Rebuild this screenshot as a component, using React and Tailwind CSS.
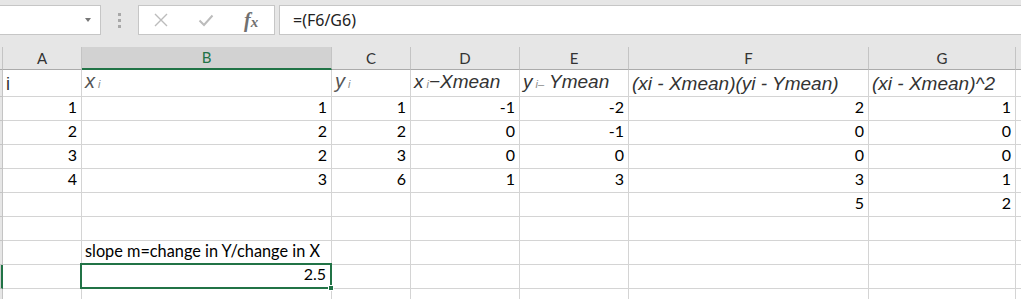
import React from "react";

const COLS = [
  { key: "rh", w: "w-[3px]" },
  { key: "A", w: "w-[79px]" },
  { key: "B", w: "w-[250px]" },
  { key: "C", w: "w-[79px]" },
  { key: "D", w: "w-[109px]" },
  { key: "E", w: "w-[109px]" },
  { key: "F", w: "w-[240px]" },
  { key: "G", w: "w-[147px]" },
];

const rows = [
  [1, 1, 1, -1, -2, 2, 1],
  [2, 2, 2, 0, -1, 0, 0],
  [3, 2, 3, 0, 0, 0, 0],
  [4, 3, 6, 1, 3, 3, 1],
  ["", "", "", "", "", 5, 2],
  ["", "", "", "", "", "", ""],
  ["", "slope", "", "", "", "", ""],
  ["", "2.5", "", "", "", "", ""],
  ["", "", "", "", "", "", ""],
];

const Sub = ({ children }) => (
  <span className="text-[11px] text-[#8a8a8a] ml-[3px]">{children}</span>
);

const headerLabels = [
  <span className="not-italic font-['Liberation_Sans'] text-[18px]">i</span>,
  <span className="text-[#555] text-[20px]">
    x<Sub>i</Sub>
  </span>,
  <span className="text-[#555] text-[20px]">
    y<Sub>i</Sub>
  </span>,
  <span>
    x<Sub>i</Sub>−Xmean
  </span>,
  <span>
    y<Sub>i–</Sub> Ymean
  </span>,
  <span>(xi - Xmean)(yi - Ymean)</span>,
  <span>(xi - Xmean)^2</span>,
];

const TopBar = () => (
  <div className="h-[47px] bg-[#e6e6e6] pt-[5px] flex items-start">
    <div className="w-[101px] h-[30px] bg-white border border-l-0 border-[#c6c6c6] flex items-center justify-end pr-[9px]">
      <div className="w-0 h-0 border-l-[3px] border-r-[3px] border-t-[4px] border-l-transparent border-r-transparent border-t-[#777]" />
    </div>
    <div className="w-[37px] h-[30px] flex flex-col items-center justify-center gap-[3px]">
      <div className="w-[3px] h-[3px] bg-[#a8a8a8]" />
      <div className="w-[3px] h-[3px] bg-[#a8a8a8]" />
      <div className="w-[3px] h-[3px] bg-[#a8a8a8]" />
    </div>
    <div className="w-[137px] h-[30px] bg-white border border-[#c6c6c6] flex items-center">
      <svg className="ml-[14px]" width="16" height="16" viewBox="0 0 16 16">
        <path d="M2 2 L14 14 M14 2 L2 14" stroke="#bcbcbc" strokeWidth="1.4" fill="none" />
      </svg>
      <svg className="ml-[29px]" width="16" height="14" viewBox="0 0 16 14">
        <path d="M1.5 7.5 L6 12 L14.5 2.5" stroke="#bcbcbc" strokeWidth="2" fill="none" />
      </svg>
      <span className="ml-[30px] font-['Liberation_Serif'] italic font-bold text-[#707070] text-[20px] leading-none">
        f<span className="text-[15px]">x</span>
      </span>
    </div>
    <div className="ml-[4px] flex-1 h-[30px] bg-white border border-r-0 border-[#c6c6c6] flex items-center pl-[13px] font-['Noto_Sans'] text-[16px] text-[#222]">
      =(F6/G6)
    </div>
  </div>
);

const HeaderRow = () => (
  <div className="h-[23px] flex bg-[#e6e6e6] font-['Lato'] text-[15px] text-[#333]">
    {COLS.map((c) => {
      const sel = c.key === "B";
      return (
        <div
          key={c.key}
          className={`${c.w} shrink-0 flex items-center justify-center border-r border-[#c4c4c4] ${
            sel
              ? "bg-[#d2d2d2] text-[#217346] border-b-2 border-b-[#217346]"
              : "border-b border-b-[#ababab]"
          }`}
        >
          {c.key === "rh" ? "" : c.key}
        </div>
      );
    })}
    <div className="flex-1 border-b border-b-[#ababab]" />
  </div>
);

const LabelRow = () => (
  <div className="h-[27px] flex">
    <div className="w-[3px] shrink-0 bg-[#e6e6e6] border-r border-b border-[#c4c4c4]" />
    {COLS.slice(1).map((c, i) => (
      <div
        key={c.key}
        className={`${c.w} shrink-0 border-r border-b border-[#d4d4d4] flex items-end pb-[1px] pl-[3px] whitespace-nowrap font-['Liberation_Sans'] italic text-[19px] leading-[22px] text-[#333]`}
      >
        {headerLabels[i]}
      </div>
    ))}
    <div className="flex-1 border-b border-[#d4d4d4]" />
  </div>
);

const DataRow = ({ cells, index }) => {
  const selRow = index === 7;
  return (
    <div className="h-[24px] flex font-['Lato'] text-[16px] text-black">
      <div
        className={`w-[3px] shrink-0 border-b border-[#c4c4c4] ${
          selRow ? "bg-[#d2d2d2] border-r-2 border-r-[#217346]" : "bg-[#e6e6e6] border-r"
        }`}
      />
      {COLS.slice(1).map((c, i) => {
        const v = cells[i];
        if (v === "slope") {
          return (
            <div
              key={c.key}
              className={`${c.w} shrink-0 border-r border-b border-[#d4d4d4] flex items-end pl-[3px] pb-[1px] whitespace-nowrap text-[16.3px]`}
            >
              slope m=change in Y/change in X
            </div>
          );
        }
        if (selRow && c.key === "B") {
          return (
            <div key={c.key} className={`${c.w} shrink-0 relative border-r border-b border-[#d4d4d4]`}>
              <div className="absolute -left-[2px] -top-[2px] w-[252px] h-[26px] border-2 border-[#217346] flex items-end justify-end pr-[4px] pb-[1px]">
                {v}
              </div>
              <div className="absolute -right-[3px] -bottom-[3px] w-[6px] h-[6px] bg-[#217346] border border-white" />
            </div>
          );
        }
        return (
          <div
            key={c.key}
            className={`${c.w} shrink-0 border-r border-b border-[#d4d4d4] flex items-end justify-end pr-[4px] pb-[1px]`}
          >
            {v}
          </div>
        );
      })}
      <div className="flex-1 border-b border-[#d4d4d4]" />
    </div>
  );
};

export default function App() {
  return (
    <div className="w-[1021px] h-[299px] overflow-hidden bg-white">
      <TopBar />
      <HeaderRow />
      <LabelRow />
      {rows.map((r, i) => (
        <DataRow key={i} cells={r} index={i} />
      ))}
    </div>
  );
}
